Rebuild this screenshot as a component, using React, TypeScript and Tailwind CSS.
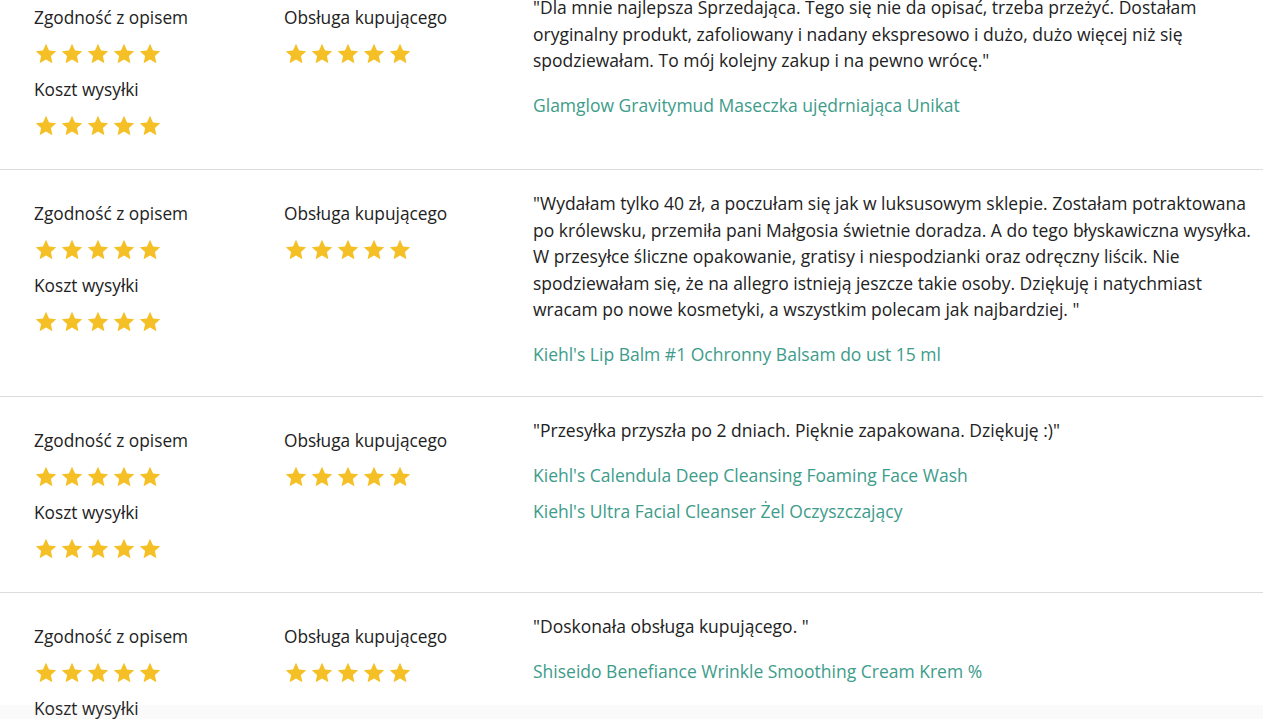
import React from 'react';

interface Review {
  text: string[];
  products: string[];
}

const reviews: Review[] = [
  {
    text: [
      '"Dla mnie najlepsza Sprzedająca. Tego się nie da opisać, trzeba przeżyć. Dostałam',
      'oryginalny produkt, zafoliowany i nadany ekspresowo i dużo, dużo więcej niż się',
      'spodziewałam. To mój kolejny zakup i na pewno wrócę."',
    ],
    products: ['Glamglow Gravitymud Maseczka ujędrniająca Unikat'],
  },
  {
    text: [
      '"Wydałam tylko 40 zł, a poczułam się jak w luksusowym sklepie. Zostałam potraktowana',
      'po królewsku, przemiła pani Małgosia świetnie doradza. A do tego błyskawiczna wysyłka.',
      'W przesyłce śliczne opakowanie, gratisy i niespodzianki oraz odręczny liścik. Nie',
      'spodziewałam się, że na allegro istnieją jeszcze takie osoby. Dziękuję i natychmiast',
      'wracam po nowe kosmetyki, a wszystkim polecam jak najbardziej. "',
    ],
    products: ["Kiehl's Lip Balm #1 Ochronny Balsam do ust 15 ml"],
  },
  {
    text: ['"Przesyłka przyszła po 2 dniach. Pięknie zapakowana. Dziękuję :)"'],
    products: [
      "Kiehl's Calendula Deep Cleansing Foaming Face Wash",
      "Kiehl's Ultra Facial Cleanser Żel Oczyszczający",
    ],
  },
  {
    text: ['"Doskonała obsługa kupującego. "'],
    products: ['Shiseido Benefiance Wrinkle Smoothing Cream Krem %'],
  },
];

function Stars() {
  return (
    <div className="flex h-[36px] items-center gap-[2px]">
      {[0, 1, 2, 3, 4].map((i) => (
        <svg key={i} width="24" height="24" viewBox="0 0 24 24" className="shrink-0">
          <path
            d="M12 1.8l3.05 6.6 7.2.8-5.35 4.9 1.5 7.1L12 17.6l-6.4 3.6 1.5-7.1L1.75 9.2l7.2-.8z"
            fill="#f5c026"
          />
        </svg>
      ))}
    </div>
  );
}

function Label({ children }: { children: React.ReactNode }) {
  return <div className="flex h-[36px] items-center text-[17.3px] text-[#222]">{children}</div>;
}

export default function App() {
  return (
    <div
      className="relative h-screen overflow-hidden bg-white"
      style={{ fontFamily: '"Open Sans", "Noto Sans", sans-serif' }}
    >
      <div className="-mt-[26px]">
        {reviews.map((r, idx) => (
          <div
            key={idx}
            className="grid grid-cols-[250px_249px_1fr] border-b border-[#dcdcdc] pb-[25px] pl-[34px] pt-[20px]"
          >
            {/* Ratings */}
            <div className="pt-[6px]">
              <Label>Zgodność z opisem</Label>
              <Stars />
              <Label>Koszt wysyłki</Label>
              <Stars />
            </div>
            <div className="pt-[6px]">
              <Label>Obsługa kupującego</Label>
              <Stars />
            </div>

            {/* Comment */}
            <div className="pb-[3px] pr-[6px] text-[17.5px] leading-[26.5px] text-[#222]">
              {r.text.map((line, i) => (
                <div key={i} className="whitespace-nowrap">
                  {line}
                </div>
              ))}
              <div className="mt-[18.5px] flex flex-col gap-[9.5px]">
                {r.products.map((p) => (
                  <div key={p} className="whitespace-nowrap text-[#3d9c8a]">
                    {p}
                  </div>
                ))}
              </div>
            </div>
          </div>
        ))}
      </div>
      <div className="pointer-events-none absolute bottom-0 left-0 right-0 h-[14px] bg-[#999]/5" />
    </div>
  );
}
